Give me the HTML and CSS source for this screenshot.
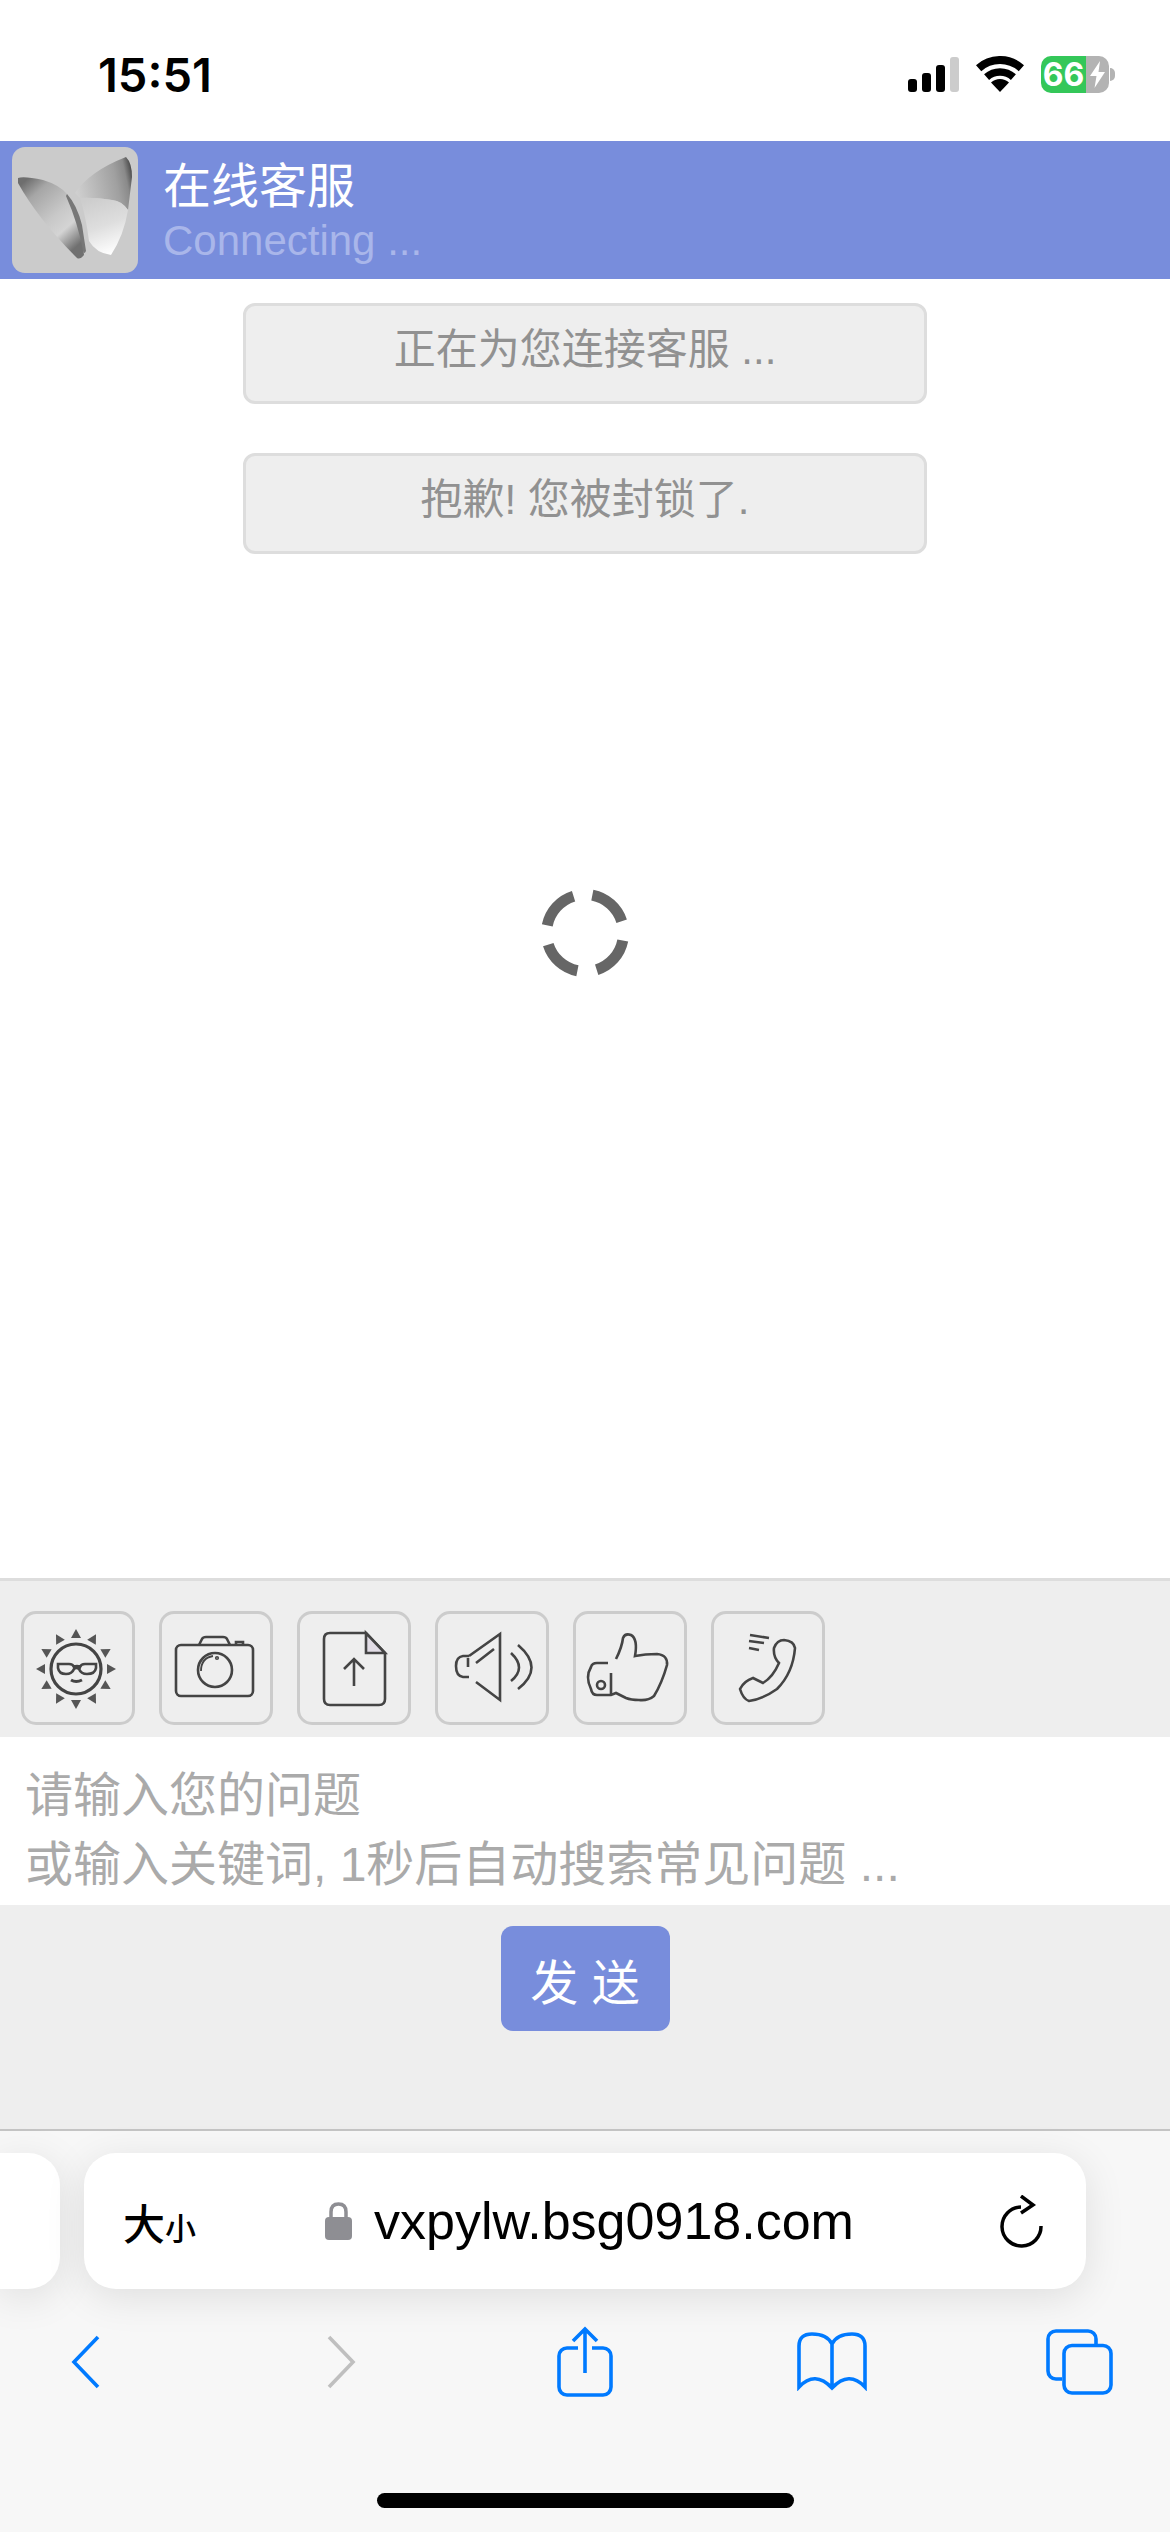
FILE: index.html
```html
<!DOCTYPE html>
<html lang="zh-CN">
<head>
    <meta charset="UTF-8">
    <meta name="viewport" content="width=device-width, initial-scale=1.0">
    <title>在线客服</title>
    <link rel="stylesheet" href="styles.css">
</head>
<body>
    <div class="status-bar">
        <span class="time">15:51</span>
        <div class="status-icons">
            <svg width="51" height="35" viewBox="0 0 51 35">
                <rect x="0" y="22" width="9" height="13" rx="3"/>
                <rect x="14" y="16" width="9" height="19" rx="3"/>
                <rect x="28" y="8" width="9" height="27" rx="3"/>
                <rect x="42" y="0" width="9" height="35" rx="3" fill="#ccc"/>
            </svg>
            <svg width="48" height="36" viewBox="0 0 48 36">
                <path d="M2.6 12.2A32 32 0 0 1 45.4 12.2" fill="none" stroke="#000" stroke-width="8"/>
                <path d="M10.6 21.1A20 20 0 0 1 37.4 21.1" fill="none" stroke="#000" stroke-width="7.5"/>
                <path d="M24 36L15 26.5A13 13 0 0 1 33 26.5Z"/>
            </svg>
            <div class="battery">
                <div class="battery-body">
                    <span class="battery-level">66</span>
                    <span class="battery-rest">
                        <svg width="17" height="27" viewBox="0 0 17 27"><path d="M11 0L1 15H7.5L5.5 27L16 11H9.5Z" fill="#fff"/></svg>
                    </span>
                </div>
                <span class="battery-nub"></span>
            </div>
        </div>
    </div>

    <div class="chat-header">
        <svg class="logo" width="126" height="126" viewBox="0 0 126 126">
            <defs>
                <linearGradient id="wingLeft" x1="0.1" y1="0.05" x2="0.75" y2="0.95">
                    <stop offset="0" stop-color="#6e6e6e"/>
                    <stop offset="0.2" stop-color="#a6a6a6"/>
                    <stop offset="0.55" stop-color="#c8c8c8"/>
                    <stop offset="0.75" stop-color="#d4d4d4"/>
                    <stop offset="1" stop-color="#707070"/>
                </linearGradient>
                <linearGradient id="wingTop" x1="0" y1="0.5" x2="1" y2="0.3">
                    <stop offset="0" stop-color="#cfcfcf"/>
                    <stop offset="0.7" stop-color="#a0a0a0"/>
                    <stop offset="0.88" stop-color="#8a8a8a"/>
                    <stop offset="1" stop-color="#4e4e4e"/>
                </linearGradient>
                <linearGradient id="wingLow" x1="0.3" y1="0" x2="0.6" y2="1">
                    <stop offset="0" stop-color="#cdcdcd"/>
                    <stop offset="0.5" stop-color="#dedede"/>
                    <stop offset="1" stop-color="#fff"/>
                </linearGradient>
            </defs>
            <rect width="126" height="126" rx="13" fill="#cbcbcb"/>
            <path d="M63 46Q78 24 114 10Q120 16 120 30L116 63Q110 54 100 53Q80 50 68 51Z" fill="url(#wingTop)"/>
            <path d="M68 51Q80 50 100 53Q110 54 116 63Q112 88 99 108Q84 106 77 94Q74 70 68 51Z" fill="url(#wingLow)"/>
            <path d="M6 31Q12 29 31 33Q48 38 56 48Q68 70 72 108Q68 113 65 111Q26 72 6 36Z" fill="url(#wingLeft)"/>
            <path d="M55 47Q65 58 70 78L74 104Q72 108 71 104Q66 76 54 49Z" fill="#777"/>
        </svg>
        <div class="header-text">
            <div class="header-title">在线客服</div>
            <div class="header-sub">Connecting ...</div>
        </div>
    </div>

    <div class="chat-body">
        <div class="notice">正在为您连接客服 ...</div>
        <div class="notice">抱歉! 您被封锁了.</div>
        <svg class="spinner" width="90" height="90" viewBox="0 0 90 90">
            <circle cx="45" cy="45" r="38.5" fill="none" stroke="#666" stroke-width="11" stroke-dasharray="41 19.5" transform="rotate(-79 45 45)"/>
        </svg>
    </div>

    <div class="toolbar">
        <button class="tool-btn">
            <svg width="108" height="108" viewBox="3 3 108 108" class="tool-icon">
                <circle cx="55" cy="58" r="25" stroke-width="3.2"/>
                <path d="M37 53H48Q52 53 53 56Q56 54 59 56Q60 53 64 53H75V57Q74 63 66 63Q60 63 58 58Q55 56 53 58Q51 63 45 63Q38 63 37 57Z"/>
                <path d="M50 69Q55 72 61 69" stroke-width="3"/>
                <g class="rays">
                    <path d="M55 18L50 27H60Z"/>
                    <path d="M55 18L50 27H60Z" transform="rotate(30 55 58)"/>
                    <path d="M55 18L50 27H60Z" transform="rotate(60 55 58)"/>
                    <path d="M55 18L50 27H60Z" transform="rotate(90 55 58)"/>
                    <path d="M55 18L50 27H60Z" transform="rotate(120 55 58)"/>
                    <path d="M55 18L50 27H60Z" transform="rotate(150 55 58)"/>
                    <path d="M55 18L50 27H60Z" transform="rotate(180 55 58)"/>
                    <path d="M55 18L50 27H60Z" transform="rotate(210 55 58)"/>
                    <path d="M55 18L50 27H60Z" transform="rotate(240 55 58)"/>
                    <path d="M55 18L50 27H60Z" transform="rotate(270 55 58)"/>
                    <path d="M55 18L50 27H60Z" transform="rotate(300 55 58)"/>
                    <path d="M55 18L50 27H60Z" transform="rotate(330 55 58)"/>
                </g>
            </svg>
        </button>
        <button class="tool-btn">
            <svg width="108" height="108" viewBox="3 3 108 108" class="tool-icon">
                <rect x="17" y="34" width="77" height="51" rx="5"/>
                <path d="M40 34L43 28Q44 26 47 26H64Q67 26 68 28L71 34"/>
                <path d="M77 34V31H84V34"/>
                <circle cx="56" cy="59" r="17"/>
                <path d="M42 60Q42 47 54 45" stroke-width="1.8"/>
                <circle cx="58" cy="47" r="0.8"/>
            </svg>
        </button>
        <button class="tool-btn">
            <svg width="108" height="108" viewBox="3 3 108 108" class="tool-icon">
                <path d="M69 22H33Q27 22 27 28V88Q27 94 33 94H82Q88 94 88 88V42Z"/>
                <path d="M69 22V42H88Z" fill="#e2dde6"/>
                <path d="M57 75V48M47 58L57 48L67 58"/>
            </svg>
        </button>
        <button class="tool-btn">
            <svg width="108" height="108" viewBox="3 3 108 108" class="tool-icon">
                <path d="M34 45L65 23V89L41 71"/>
                <path d="M34 45H28Q21 46 21 55Q21 65 28 66H34"/>
                <path d="M33 47V56M41 52L59 38"/>
                <path d="M76 42Q92 57 76 70M83 34Q110 57 83 78"/>
            </svg>
        </button>
        <button class="tool-btn">
            <svg width="108" height="108" viewBox="3 3 108 108" class="tool-icon">
                <path d="M43 48Q49 36 50 27Q52 22 58 24Q65 28 62 45Q72 43 84 43Q95 44 94 54Q89 72 81 85Q75 90 66 89Q58 89 53 87L43 82L38 84H24Q19 84 18 78Q12 66 18 56Q19 52 24 52H35"/>
                <path d="M38 62V84"/>
                <circle cx="28" cy="74" r="4"/>
            </svg>
        </button>
        <button class="tool-btn">
            <svg width="108" height="108" viewBox="3 3 108 108" class="tool-icon">
                <path d="M63 37Q66 29 73 29Q83 30 84 37Q82 62 66 78Q52 88 38 90Q32 88 29 78Q33 70 42 67L52 72Q62 66 68 52Q62 46 63 37Z"/>
                <path d="M39 24L58 27M38 30L53 32M38 37L48 39"/>
            </svg>
        </button>
    </div>

    <div class="input-box">
        <div>请输入您的问题</div>
        <div>或输入关键词, 1秒后自动搜索常见问题 ...</div>
    </div>

    <div class="send-row">
        <button class="send-btn">发 送</button>
    </div>

    <div class="safari-bar">
        <div class="url-row">
            <div class="other-tab"></div>
            <div class="url-bar">
                <span class="text-size">大<small>小</small></span>
                <span class="url">
                    <svg width="27" height="38" viewBox="0 0 27 38">
                        <path d="M6 18V10Q6 2 13.5 2Q21 2 21 10V18" fill="none" stroke="#8e8e93" stroke-width="3.5"/>
                        <rect y="15" width="27" height="23" rx="4" fill="#8e8e93"/>
                    </svg>
                    vxpylw.bsg0918.com
                </span>
                <svg class="reload" width="43" height="53" viewBox="0 0 43 53">
                    <path d="M21 12A19.5 19.5 0 1 0 41 31" fill="none" stroke="#000" stroke-width="3.5"/>
                    <path d="M21 1L33 10L21 18" fill="none" stroke="#000" stroke-width="3.5"/>
                </svg>
            </div>
        </div>
        <div class="nav-row">
            <svg width="30" height="54" viewBox="0 0 30 54"><path d="M27 2L3 27L27 52" class="nav-line"/></svg>
            <svg width="30" height="54" viewBox="0 0 30 54"><path d="M3 2L27 27L3 52" class="nav-line off"/></svg>
            <svg width="56" height="71" viewBox="0 0 56 71">
                <path class="nav-line" d="M21 22H10A8 8 0 0 0 2 30V61A8 8 0 0 0 10 69H46A8 8 0 0 0 54 61V30A8 8 0 0 0 46 22H35"/>
                <path class="nav-line" d="M28 47V3M16 15L28 3L40 15"/>
            </svg>
            <svg width="70" height="59" viewBox="0 0 70 59">
                <path class="nav-line" d="M35 12Q30 2 15 2Q2 2 2 14V55Q18 38 35 56Q52 38 68 55V14Q68 2 55 2Q40 2 35 12V56"/>
            </svg>
            <svg width="67" height="66" viewBox="0 0 67 66">
                <rect class="nav-line" x="18" y="16.5" width="47" height="47.5" rx="8"/>
                <path class="nav-line" d="M16 50H10A8 8 0 0 1 2 42V10A8 8 0 0 1 10 2H42A8 8 0 0 1 50 10V15"/>
            </svg>
        </div>
        <div class="home-indicator"></div>
    </div>
</body>
</html>
```

FILE: styles.css
```css
body {
    margin: 0;
    height: 2532px;
    display: flex;
    flex-direction: column;
    font-family: "Liberation Sans", "Noto Sans CJK SC", sans-serif;
    background-color: white;
    overflow: hidden;
}

.status-bar {
    height: 141px;
    flex-shrink: 0;
    display: flex;
    justify-content: space-between;
    align-items: center;
    padding: 18px 55px 0 98px;
    box-sizing: border-box;
}

.time {
    font-family: Inter, sans-serif;
    font-size: 47px;
    font-weight: 600;
    color: #000;
    margin-top: -11px;
}

.status-icons {
    display: flex;
    align-items: center;
    gap: 17px;
    margin-top: -11px;
}

.battery {
    display: flex;
    align-items: center;
    gap: 1px;
}

.battery-body {
    display: flex;
    width: 68px;
    height: 37px;
    border-radius: 10px;
    overflow: hidden;
}

.battery-level {
    width: 45px;
    background-color: #34c759;
    color: white;
    font-family: Inter, sans-serif;
    font-size: 32px;
    font-weight: 700;
    line-height: 37px;
    text-align: center;
}

.battery-rest {
    flex: 1;
    background-color: #b3b3b3;
    display: flex;
    align-items: center;
    justify-content: center;
}

.battery-nub {
    width: 5px;
    height: 13px;
    background-color: #b3b3b3;
    border-radius: 0 6px 6px 0;
}

.chat-header {
    height: 138px;
    flex-shrink: 0;
    display: flex;
    align-items: center;
    background-color: #788ddc;
    padding-left: 12px;
}

.header-text {
    margin-left: 25px;
    padding-top: 2px;
}

.header-title {
    font-size: 48px;
    line-height: 60px;
    color: white;
}

.header-sub {
    font-size: 42px;
    line-height: 48px;
    color: #a9b6ea;
}

.chat-body {
    flex: 1;
    position: relative;
    display: flex;
    flex-direction: column;
    align-items: center;
    gap: 49px;
    padding-top: 24px;
}

.notice {
    width: 684px;
    height: 101px;
    box-sizing: border-box;
    background-color: #eee;
    border: 3px solid #ddd;
    border-radius: 12px;
    color: #919191;
    font-size: 42px;
    line-height: 88px;
    text-align: center;
}

.spinner {
    position: absolute;
    left: 540px;
    top: 609px;
}

.toolbar {
    display: flex;
    gap: 24px;
    flex-shrink: 0;
    height: 159px;
    box-sizing: border-box;
    padding: 30px 0 0 21px;
    background-color: #eee;
    border-top: 3px solid #ddd;
}

.tool-btn {
    width: 114px;
    height: 114px;
    padding: 0;
    background: none;
    border: 3px solid #ccc;
    border-radius: 15px;
    display: flex;
    align-items: center;
    justify-content: center;
}

.tool-icon {
    fill: none;
    stroke: #444;
    stroke-width: 2.6;
}

.tool-icon .rays {
    fill: #555;
    stroke: none;
}

.input-box {
    height: 168px;
    flex-shrink: 0;
    box-sizing: border-box;
    padding: 24px 0 0 25px;
    font-size: 48px;
    line-height: 69px;
    color: #aaa;
}

.send-row {
    height: 226px;
    flex-shrink: 0;
    box-sizing: border-box;
    padding-top: 21px;
    background-color: #eee;
    border-bottom: 2px solid #c4c4c4;
    text-align: center;
}

.send-btn {
    width: 169px;
    height: 105px;
    padding: 0;
    border: none;
    border-radius: 12px;
    background-color: #788ddc;
    color: white;
    font-family: "Liberation Sans", "Noto Sans CJK SC", sans-serif;
    font-size: 48px;
}

.safari-bar {
    height: 401px;
    flex-shrink: 0;
    display: flex;
    flex-direction: column;
    background-color: #f7f7f7;
}

.url-row {
    display: flex;
    gap: 24px;
    padding-top: 22px;
}

.other-tab {
    width: 60px;
    height: 136px;
    background-color: white;
    border-radius: 0 32px 32px 0;
    box-shadow: 0 8px 40px rgba(0,0,0,0.1);
}

.url-bar {
    width: 1002px;
    height: 136px;
    display: grid;
    grid-template-columns: 1fr auto 1fr;
    align-items: center;
    box-sizing: border-box;
    padding: 0 43px 0 39px;
    background-color: white;
    border-radius: 32px;
    box-shadow: 0 8px 40px rgba(0,0,0,0.1);
}

.text-size {
    font-size: 42px;
    font-weight: 500;
    color: #000;
}

.text-size small {
    font-size: 31px;
}

.url {
    display: flex;
    align-items: center;
    gap: 22px;
    margin-left: 13px;
    font-size: 52px;
    color: #000;
}

.reload {
    justify-self: end;
}

.nav-row {
    display: grid;
    grid-template-columns: 172px 338px 150px 344px 151px;
    justify-items: center;
    align-items: center;
    height: 71px;
    margin-top: 37px;
}

.nav-line {
    fill: none;
    stroke: #007aff;
    stroke-width: 3.6;
}

.nav-line.off {
    stroke: #bfbfbf;
}

.home-indicator {
    width: 417px;
    height: 15px;
    margin: auto auto 24px;
    background-color: #000;
    border-radius: 8px;
}
```
